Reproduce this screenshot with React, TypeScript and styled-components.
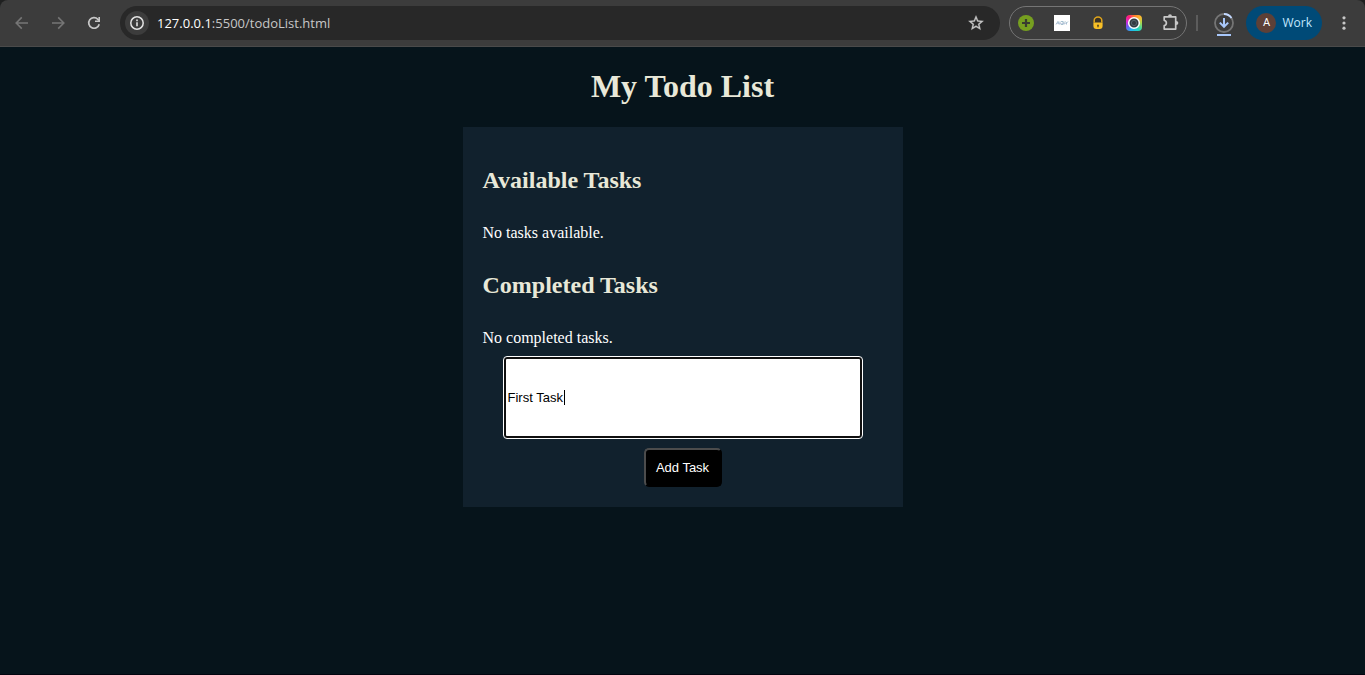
import React, { useState } from "react";
import styled, { createGlobalStyle } from "styled-components";

const GlobalStyle = createGlobalStyle`
  * { box-sizing: border-box; }
  body {
    margin: 0;
    background: #06141b;
    color: #ffffff;
    font-family: "Liberation Serif", "Times New Roman", serif;
    font-size: 16px;
  }
`;

const Screen = styled.div`
  display: flex;
  flex-direction: column;
  min-height: 100vh;
  background: #06141b;
  border-bottom: 1px solid #02040f;
`;

const ToolbarBack = styled.header`
  background: #1f2020;
`;

const Toolbar = styled.div`
  display: flex;
  align-items: center;
  height: 47px;
  padding: 0 9px 1px 10px;
  background: #3c3c3c;
  border-bottom: 1px solid #4a4a4a;
  border-radius: 8px 8px 0 0;
  font-family: "Open Sans", "Noto Sans", sans-serif;
`;

const IconButton = styled.button<{ $tone?: string }>`
  display: flex;
  align-items: center;
  justify-content: center;
  flex: none;
  width: 24px;
  height: 24px;
  padding: 0;
  border: 0;
  border-radius: 50%;
  background: none;
  color: ${(p) => p.$tone ?? "#c7c7c7"};
`;

const NavGroup = styled.nav`
  display: flex;
  gap: 12px;
  margin-right: 14px;
`;

const AddressBar = styled.div`
  display: flex;
  align-items: center;
  flex: 1;
  min-width: 0;
  height: 34px;
  padding: 0 12px 0 5px;
  border-radius: 17px;
  background: #282828;
`;

const SiteInfo = styled(IconButton)`
  background: #3c3c3c;
  color: #e3e3e3;
`;

const Url = styled.div`
  flex: 1;
  min-width: 0;
  padding-left: 8px;
  overflow: hidden;
  white-space: nowrap;
  font-size: 13px;
  line-height: 20px;
  color: #c7c7c7;
`;

const Host = styled.span`
  color: #ffffff;
`;

const Extensions = styled.div`
  display: flex;
  align-items: center;
  gap: 12px;
  height: 34px;
  margin-left: 9px;
  padding: 0 4px;
  border: 1px solid #757575;
  border-radius: 17px;
`;

const Divider = styled.span`
  width: 2px;
  height: 16px;
  margin: 0 14px 0 9px;
  background: #5c5c5c;
`;

const Profile = styled.button`
  display: flex;
  align-items: center;
  gap: 6px;
  height: 34px;
  margin: 0 10px;
  padding: 0 10px;
  border: 0;
  border-radius: 17px;
  background: #004a77;
  color: #c2e7ff;
  font-family: "Open Sans", "Noto Sans", sans-serif;
  font-size: 12px;
  font-weight: 500;
  line-height: 20px;
`;

const Avatar = styled.span`
  display: flex;
  align-items: center;
  justify-content: center;
  width: 20px;
  height: 20px;
  border-radius: 50%;
  background: #5d4037;
  color: #ffffff;
  font-family: Roboto, sans-serif;
  font-size: 11px;
  font-weight: 400;
`;

const Page = styled.main`
  display: flex;
  flex-direction: column;
  align-items: center;
  padding: 21px 8px 20px;
`;

const Title = styled.h1`
  margin: 0 0 22px;
  font-size: 32px;
  line-height: 37px;
  color: #e8e8d8;
`;

const Card = styled.section`
  width: 100%;
  max-width: 440px;
  padding: 20px;
  background: #11212d;
`;

const Heading = styled.h2`
  margin: 20px 0;
  font-size: 24px;
  line-height: 27px;
  color: #e8e8d8;
`;

const Message = styled.p`
  margin: 0;
  padding: 10px 0;
  line-height: 18px;
`;

const Form = styled.form`
  display: flex;
  flex-direction: column;
  align-items: center;
  gap: 10px;
`;

const Field = styled.div`
  position: relative;
  align-self: stretch;
  margin: 0 21px;
`;

const TaskInput = styled.input`
  display: block;
  width: 100%;
  height: 81px;
  padding: 0 2px;
  border: 2px solid #101010;
  border-radius: 3px;
  outline: 1px solid #ffffff;
  background: #ffffff;
  color: #000000;
  caret-color: transparent;
  font-family: "Liberation Sans", Arial, sans-serif;
  font-size: 13px;
`;

const Caret = styled.span`
  position: absolute;
  top: 33px;
  left: 60px;
  width: 1px;
  height: 15px;
  background: #000000;
`;

const AddButton = styled.button`
  min-width: 78px;
  height: 39px;
  padding: 0 10px;
  border: 2px solid;
  border-color: #4c4c4c #000000 #000000 #4c4c4c;
  border-radius: 5px;
  background: #000000;
  color: #ffffff;
  font-family: "Liberation Sans", Arial, sans-serif;
  font-size: 13px;
`;

const ArrowIcon = ({ forward = false }: { forward?: boolean }) => (
  <svg width="16" height="16" viewBox="0 0 16 16" fill="none" stroke="currentColor" strokeWidth="1.6">
    {forward ? <path d="M2 8h11.4M8.2 2.4 13.8 8l-5.6 5.6" /> : <path d="M14 8H2.6M7.8 2.4 2.2 8l5.6 5.6" />}
  </svg>
);

const ReloadIcon = () => (
  <svg width="16" height="16" viewBox="0 0 16 16">
    <path d="M13.2 9.2A5.3 5.3 0 1 1 11.9 4.3L13 5.4" fill="none" stroke="currentColor" strokeWidth="1.7" />
    <path d="M14 2v5H9V5.6h3.4V2z" fill="currentColor" />
  </svg>
);

const InfoIcon = () => (
  <svg width="16" height="16" viewBox="0 0 16 16">
    <circle cx="8" cy="8" r="6.2" fill="none" stroke="currentColor" strokeWidth="1.5" />
    <path d="M7.2 7.2h1.6v4H7.2zM7.2 4.6h1.6v1.6H7.2z" fill="currentColor" />
  </svg>
);

const StarIcon = () => (
  <svg width="18" height="18" viewBox="0 0 24 24" fill="currentColor" stroke="currentColor" strokeWidth=".4">
    <path d="M22 9.24l-7.19-.62L12 2 9.19 8.63 2 9.24l5.46 4.73L5.82 21 12 17.27 18.18 21l-1.63-7.03L22 9.24zM12 15.4l-3.76 2.27 1-4.28-3.32-2.88 4.38-.38L12 6.1l1.71 4.04 4.38.38-3.32 2.88 1 4.28L12 15.4z" />
  </svg>
);

const PlusIcon = () => (
  <svg width="16" height="16" viewBox="0 0 16 16">
    <circle cx="8" cy="8" r="8" fill="#769f20" />
    <path d="M8 4v8M4 8h8" stroke="#383c30" strokeWidth="2.2" />
  </svg>
);

const SketchIcon = () => (
  <svg width="16" height="16" viewBox="0 0 16 16" fill="none">
    <path fill="#ffffff" d="M0 0h16v16H0z" />
    <path d="M2 9.5 4 6.4l1 3M6 6.5v3M7 6.5h2v3H7M10 6.5v3M11.5 6.5l1 1.5 1.5-1.5M12.5 8v1.5" stroke="#8fb0c4" strokeWidth=".8" />
    <path d="M2.5 8.5h10" stroke="#b4c0d8" strokeWidth=".6" />
  </svg>
);

const LockIcon = () => (
  <svg width="16" height="16" viewBox="0 0 16 16">
    <path d="M4.2 7.5V5.4a3.8 3.4 0 0 1 7.6 0v2.1" fill="#3a3226" stroke="#e0a51c" strokeWidth="1.5" />
    <path d="M3.4 7.6h9.2V11a3 3 0 0 1-3 3H6.400a3 3 0 0 1-3-3z" fill="#f8bf26" />
    <path d="M8 9.4a1 1 0 0 1 .6 1.700v1.200H7.400v-1.200A1 1 0 0 1 8 9.400" fill="#4a3a18" />
  </svg>
);

const RingBack = styled.span`
  display: flex;
  width: 16px;
  height: 16px;
  border-radius: 4px;
  background: conic-gradient(from 0deg, #ff7a2a, #ffb52e 45deg, #a8d850 90deg, #20d8c0 145deg, #20b8f0 200deg, #7a50f0 245deg, #d828d8 280deg, #ff207a 320deg, #ff7a2a);
`;

const RingIcon = () => (
  <RingBack>
    <svg width="16" height="16" viewBox="0 0 16 16">
      <circle cx="8" cy="8" r="5.3" fill="#343b42" stroke="#ffffff" strokeWidth="1.5" />
      <circle cx="8" cy="8" r="2.6" fill="none" stroke="#54646b" strokeWidth="1" />
    </svg>
  </RingBack>
);

const PuzzleIcon = () => (
  <svg width="18" height="18" viewBox="0 0 18 18">
    <path d="M3.2 2.900h11.500v12.200H3.200v-3.400c2.900-.6 2.900-4.800 0-5.400z" fill="none" stroke="currentColor" strokeWidth="1.7" strokeLinejoin="round" />
    <path d="M7 2.600a2 2.400 0 0 1 4 0zM15 7a2.400 2 0 0 1 0 4z" fill="currentColor" />
  </svg>
);

const DownloadIcon = () => (
  <svg width="22" height="26" viewBox="0 0 22 26" fill="none">
    <circle cx="11" cy="13" r="9" stroke="#757575" strokeWidth="1.8" />
    <path d="M11 4a9 9 0 0 1 7.5 4" stroke="#c2d8ff" strokeWidth="1.8" />
    <path d="M11 8v8.5M6.8 12.6 11 16.8l4.2-4.2" stroke="#a8c7fa" strokeWidth="2" />
    <path d="M4 24h14v2H4z" fill="#a8c7fa" />
  </svg>
);

const DotsIcon = () => (
  <svg width="16" height="16" viewBox="0 0 16 16" fill="currentColor">
    <circle cx="8" cy="2.8" r="1.6" />
    <circle cx="8" cy="8" r="1.6" />
    <circle cx="8" cy="13.2" r="1.6" />
  </svg>
);

const extensions = [
  { name: "Add", icon: <PlusIcon /> },
  { name: "Sketch", icon: <SketchIcon /> },
  { name: "Lock", icon: <LockIcon /> },
  { name: "Capture", icon: <RingIcon /> },
  { name: "Extensions", icon: <PuzzleIcon /> },
];

const BrowserToolbar = () => (
  <ToolbarBack>
    <Toolbar>
      <NavGroup>
        <IconButton aria-label="Back" $tone="#757575"><ArrowIcon /></IconButton>
        <IconButton aria-label="Forward" $tone="#757575"><ArrowIcon forward /></IconButton>
        <IconButton aria-label="Reload"><ReloadIcon /></IconButton>
      </NavGroup>
      <AddressBar>
        <SiteInfo aria-label="Site information"><InfoIcon /></SiteInfo>
        <Url><Host>127.0.0.1</Host>:5500/todoList.html</Url>
        <IconButton aria-label="Bookmark"><StarIcon /></IconButton>
      </AddressBar>
      <Extensions>
        {extensions.map((item) => (
          <IconButton key={item.name} aria-label={item.name}>{item.icon}</IconButton>
        ))}
      </Extensions>
      <Divider />
      <IconButton aria-label="Downloads"><DownloadIcon /></IconButton>
      <Profile><Avatar>A</Avatar>Work</Profile>
      <IconButton aria-label="Menu"><DotsIcon /></IconButton>
    </Toolbar>
  </ToolbarBack>
);

export default function App() {
  const [draft, setDraft] = useState("First Task");
  const [tasks, setTasks] = useState<string[]>([]);

  const addTask = (event: React.FormEvent) => {
    event.preventDefault();
    if (!draft.trim()) return;
    setTasks([...tasks, draft.trim()]);
    setDraft("");
  };

  return (
    <Screen>
      <GlobalStyle />
      <BrowserToolbar />
      <Page>
        <Title>My Todo List</Title>
        <Card>
          <Heading>Available Tasks</Heading>
          {tasks.length === 0 && <Message>No tasks available.</Message>}
          {tasks.map((task, index) => (
            <Message key={index}>{task}</Message>
          ))}
          <Heading>Completed Tasks</Heading>
          <Message>No completed tasks.</Message>
          <Form onSubmit={addTask}>
            <Field>
              <TaskInput
                aria-label="New task"
                value={draft}
                onChange={(event) => setDraft(event.target.value)}
              />
              {draft === "First Task" && <Caret />}
            </Field>
            <AddButton type="submit">Add Task</AddButton>
          </Form>
        </Card>
      </Page>
    </Screen>
  );
}
